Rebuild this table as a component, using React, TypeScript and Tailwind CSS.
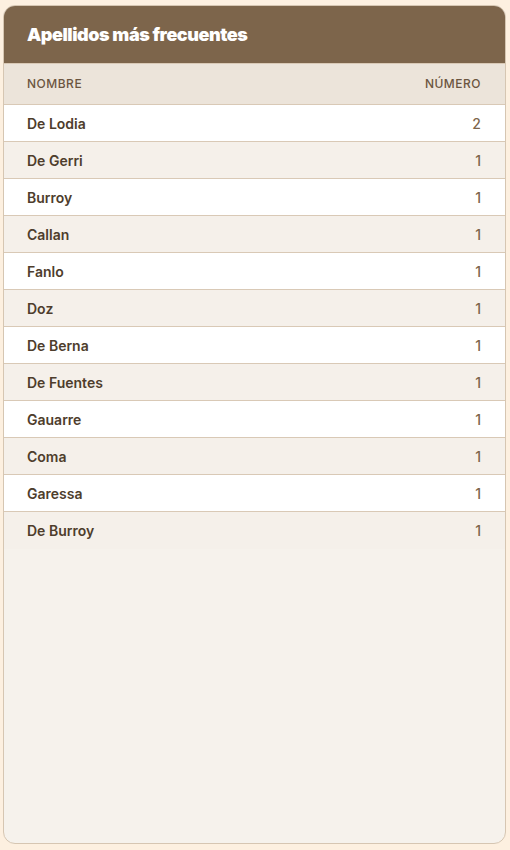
import React from "react";

const rows: [string, number][] = [
  ["De Lodia", 2],
  ["De Gerri", 1],
  ["Burroy", 1],
  ["Callan", 1],
  ["Fanlo", 1],
  ["Doz", 1],
  ["De Berna", 1],
  ["De Fuentes", 1],
  ["Gauarre", 1],
  ["Coma", 1],
  ["Garessa", 1],
  ["De Burroy", 1],
];

export default function App() {
  return (
    <div
      className="h-[850px] w-[510px] bg-[#fdf0e0] pt-[5px] pl-[3px] pr-[4px] pb-[6px]"
      style={{ fontFamily: "Inter, 'Noto Sans', sans-serif" }}
    >
      <div className="flex h-full flex-col overflow-hidden rounded-[12px] border border-[#d6c6b2] bg-[#f6f2ec]">
        <div className="flex h-[57px] shrink-0 items-center bg-[#7d654b] pl-[23px] pr-[24px]">
          <h1 className="text-[18px] font-black leading-none tracking-[-0.45px] text-white">
            Apellidos más frecuentes
          </h1>
        </div>
        <div className="flex h-[42px] shrink-0 items-center justify-between border-y border-[#d9c9b6] bg-[#ece4da] pl-[23px] pr-[24px] text-[12px] font-medium uppercase tracking-[0.5px] text-[#6b5540]">
          <span>Nombre</span>
          <span>Número</span>
        </div>
        {rows.map(([name, n], i) => (
          <div
            key={name}
            className={
              i === rows.length - 1
                ? "flex h-[37px] shrink-0 items-center justify-between bg-[#f5f0ea] pl-[23px] pr-[24px]"
                : i % 2 === 0
                ? "flex h-[37px] shrink-0 items-center justify-between border-b border-[#d9c9b6] bg-white pl-[23px] pr-[24px]"
                : "flex h-[37px] shrink-0 items-center justify-between border-b border-[#d9c9b6] bg-[#f5f0ea] pl-[23px] pr-[24px]"
            }
          >
            <span className="text-[14px] font-semibold text-[#4e3d2c]">{name}</span>
            <span className="text-[14px] font-medium text-[#7d654b]">{n}</span>
          </div>
        ))}
      </div>
    </div>
  );
}
